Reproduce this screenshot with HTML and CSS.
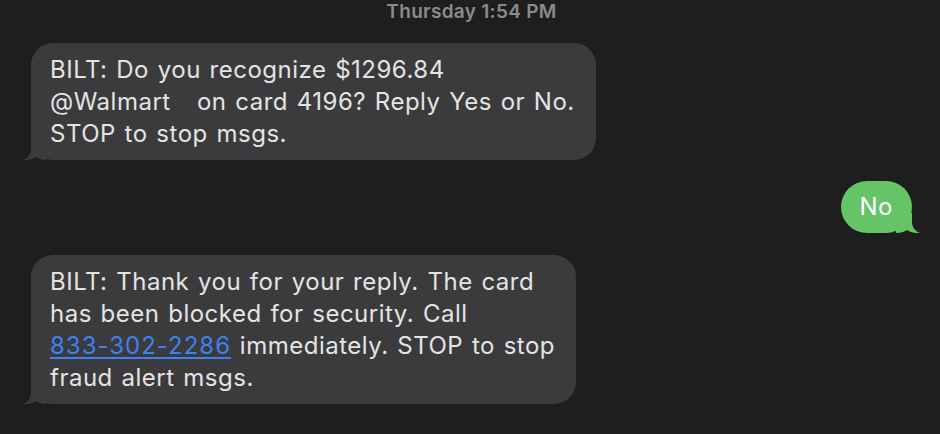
FILE: index.html
```html
<!DOCTYPE html>
<html>
<head>
<meta charset="utf-8">
<link rel="stylesheet" href="styles.css">
</head>
<body>
<div class="thread">
  <div class="stamp"><span class="day">Thursday</span> 1:54 PM</div>
  <div class="row row-in">
    <div class="bubble bubble-in">BILT: Do you recognize $1296.84<br>@Walmart&nbsp;&nbsp; on card 4196? Reply Yes or No.<br>STOP to stop msgs.<svg class="tail tail-in" width="24" height="20" viewBox="0 0 24 20"><path d="M8,0 L8,9 C8,14 5,18 0,20 C5,20.6 10,19 13,17 C16,19 19,20 24,20 L24,0 Z"/></svg></div>
  </div>
  <div class="row row-out">
    <div class="bubble bubble-out">No<svg class="tail tail-out" width="24" height="20" viewBox="0 0 24 20"><path d="M16,0 L16,9 C16,14 19,18 24,20 C19,20.6 14,19 11,17 C8,19 5,20 0,20 L0,0 Z"/></svg></div>
  </div>
  <div class="row row-in">
    <div class="bubble bubble-in">BILT: Thank you for your reply. The card<br>has been blocked for security. Call<br><a class="link" href="#">833-302-2286</a> immediately. STOP to stop<br>fraud alert msgs.<svg class="tail tail-in" width="24" height="20" viewBox="0 0 24 20"><path d="M8,0 L8,9 C8,14 5,18 0,20 C5,20.6 10,19 13,17 C16,19 19,20 24,20 L24,0 Z"/></svg></div>
  </div>
</div>
</body>
</html>
```
FILE: styles.css
```css
html, body {
  margin: 0;
  padding: 0;
  background: #1e1e1e;
}
body {
  width: 940px;
  height: 434px;
  overflow: hidden;
  font-family: Inter, "Noto Sans", "Liberation Sans", sans-serif;
}
.thread {
  display: flex;
  flex-direction: column;
}
.stamp {
  text-align: center;
  color: #8b8b8b;
  font-size: 19px;
  font-weight: 600;
  letter-spacing: 0.3px;
  line-height: 24px;
  padding-left: 3px;
  margin-bottom: 19px;
}
.row {
  display: flex;
}
.row-in {
  justify-content: flex-start;
  padding-left: 31px;
}
.row-out {
  justify-content: flex-end;
  padding-right: 28px;
  margin-top: 21px;
  margin-bottom: 22px;
}
.bubble {
  position: relative;
  font-size: 24px;
  letter-spacing: 0.5px;
  word-spacing: 1.5px;
  line-height: 32px;
  padding: 11px 21px 10px 19px;
  border-radius: 22px;
  white-space: nowrap;
}
.bubble-in {
  background: #3b3b3d;
  color: #e4e4e4;
}
.bubble-out {
  background: #65c466;
  color: #ffffff;
  padding: 10px 19px 10px 19px;
  border-radius: 26px;
}
.tail {
  position: absolute;
  bottom: 0;
}
.tail-in {
  left: -8px;
  fill: #3b3b3d;
}
.tail-out {
  right: -8px;
  fill: #65c466;
}
.link {
  color: #3b82f0;
  letter-spacing: 1px;
  text-decoration: underline;
  text-underline-offset: 3px;
  text-decoration-thickness: 1.5px;
}
```
